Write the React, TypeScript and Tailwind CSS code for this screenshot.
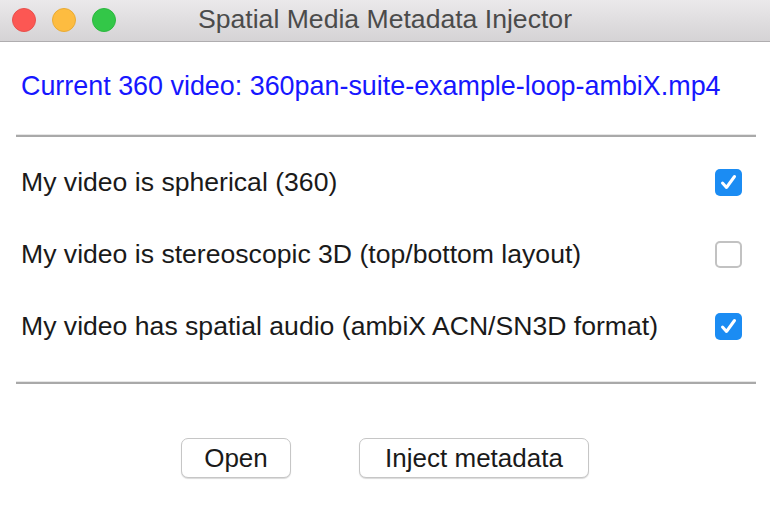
const options = [
  { label: 'My video is spherical (360)', checked: true },
  { label: 'My video is stereoscopic 3D (top/bottom layout)', checked: false },
  { label: 'My video has spatial audio (ambiX ACN/SN3D format)', checked: true },
];

function Checkbox({ checked }: { checked: boolean }) {
  if (!checked) {
    return <div className="w-[27px] h-[27px] rounded-[5px] border-2 border-[#c2c2c2] bg-white" />;
  }
  return (
    <div className="w-[27px] h-[27px] rounded-[5px] bg-[#1b8cf3]">
      <svg width="27" height="27" viewBox="0 0 27 27" fill="none">
        <path d="M7.5 14 L11.5 18.5 L19.5 7.5" stroke="white" strokeWidth="3" strokeLinecap="round" strokeLinejoin="round" />
      </svg>
    </div>
  );
}

function Separator() {
  return (
    <div className="ml-[16px] mr-[14px]">
      <div className="h-px bg-[#e6e6e6]" />
      <div className="h-[2px] bg-[#a9a9a9]" />
    </div>
  );
}

export default function App() {
  return (
    <div className="w-[770px] h-[510px] bg-white text-[#1a1a1a] font-['Liberation_Sans',Arial,sans-serif] overflow-hidden">
      <div className="h-[42px] grid grid-cols-[1fr_auto_1fr] items-center bg-gradient-to-b from-[#ebe9eb] to-[#d5d3d5] border-b border-[#afadaf]">
        <div className="flex items-center gap-[16px] pl-[12px] pb-[2px]">
          <span className="w-[24px] h-[24px] rounded-full bg-[#fc5753] border border-[#e8504c]" />
          <span className="w-[24px] h-[24px] rounded-full bg-[#fdbc40] border border-[#e9ab34]" />
          <span className="w-[24px] h-[24px] rounded-full bg-[#33c748] border border-[#2cb83f]" />
        </div>
        <div className="text-[26.6px] leading-[30px] text-[#4b4b4b] pb-[3px]">Spatial Media Metadata Injector</div>
        <div />
      </div>

      <div className="pt-[29px] pl-[21px] text-[26.9px] leading-[30px] text-[#1717ff]">
        Current 360 video: 360pan-suite-example-loop-ambiX.mp4
      </div>

      <div className="mt-[33px]">
        <Separator />
      </div>

      <div className="mt-[9px] flex flex-col">
        {options.map((o) => (
          <div key={o.label} className="h-[72px] flex items-center justify-between pl-[21px] pr-[28px]">
            <span className="text-[26.6px] leading-[30px]">{o.label}</span>
            <Checkbox checked={o.checked} />
          </div>
        ))}
      </div>

      <div className="mt-[19px]">
        <Separator />
      </div>

      <div className="mt-[54px] flex justify-center gap-[68px]">
        <button className="w-[110px] h-[40px] rounded-[7px] border border-[#c6c6c6] bg-white shadow-[0_1px_1px_rgba(0,0,0,0.15)] text-[26px] leading-[30px] text-[#1a1a1a]">
          Open
        </button>
        <button className="w-[230px] h-[40px] rounded-[7px] border border-[#c6c6c6] bg-white shadow-[0_1px_1px_rgba(0,0,0,0.15)] text-[26px] leading-[30px] text-[#1a1a1a]">
          Inject metadata
        </button>
      </div>
    </div>
  );
}
